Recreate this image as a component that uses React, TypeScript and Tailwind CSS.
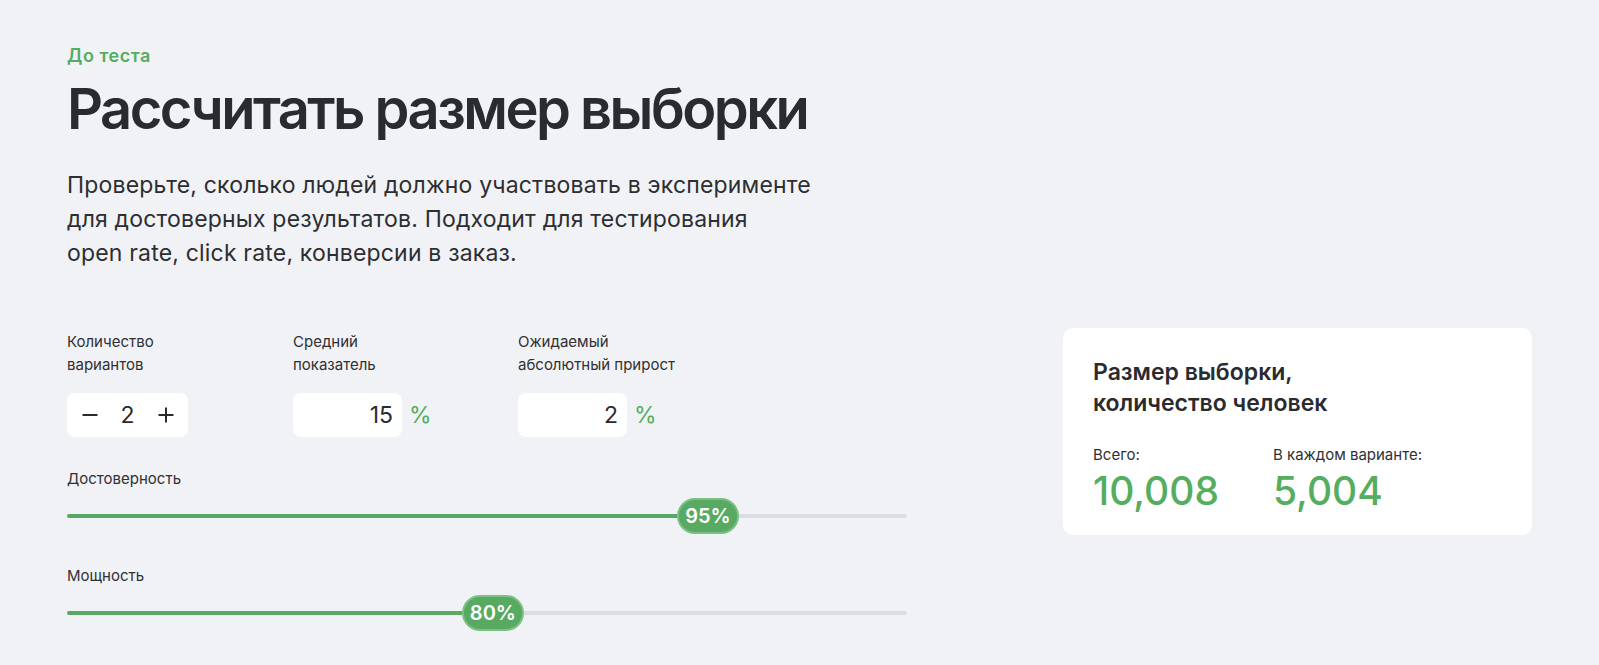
import React from "react";

const font = { fontFamily: "Inter, 'Noto Sans', sans-serif" };

function Slider({ label, value, pos }: { label: string; value: string; pos: "a" | "b" }) {
  return (
    <div className="flex flex-col">
      <div className="text-[15px] leading-[23px] text-[#2f3033]">{label}</div>
      <div className="relative mt-[8px] h-[36px] w-[840px]">
        <div className="absolute left-0 right-0 top-[16px] h-[4px] rounded-full bg-[#dcdde2]" />
        <div
          className={
            "absolute left-0 top-[16px] h-[4px] rounded-full bg-[#58aa62] " +
            (pos === "a" ? "w-[76.3%]" : "w-[50.7%]")
          }
        />
        <div
          className={
            "absolute top-0 flex h-[36px] w-[62px] -translate-x-1/2 items-center justify-center rounded-full border-2 border-[#7cc184] bg-[#58aa62] text-[20px] font-semibold leading-none text-white " +
            (pos === "a" ? "left-[76.3%]" : "left-[50.7%]")
          }
        >
          {value}
        </div>
      </div>
    </div>
  );
}

function Label({ children }: { children: React.ReactNode }) {
  return <div className="text-[15px] leading-[23px] text-[#2f3033]">{children}</div>;
}

export default function App() {
  return (
    <div className="min-h-screen w-full bg-[#f1f2f6] text-[#2a2b2f]" style={font}>
      <div className="px-[67px] pt-[44px]">
        <div className="text-[18px] font-semibold leading-[24px] tracking-[0.03em] text-[#55ad60]">До теста</div>
        <h1 className="mt-[8px] whitespace-nowrap text-[56px] font-semibold leading-[66px] tracking-[-0.045em] text-[#2a2b2f]">
          Рассчитать размер выборки
        </h1>
        <p className="mt-[26px] whitespace-nowrap text-[23px] leading-[34px] tracking-[0.008em] text-[#2d2e32]">
          Проверьте, сколько людей должно участвовать в эксперименте
          <br />
          для достоверных результатов. Подходит для тестирования
          <br />
          open rate, click rate, конверсии в заказ.
        </p>

        <div className="mt-[60px] flex items-start justify-between">
          <div className="flex w-[840px] flex-col">
            <div className="grid grid-cols-[226px_225px_auto]">
              <div className="flex flex-col">
                <Label>
                  Количество
                  <br />
                  вариантов
                </Label>
                <div className="mt-[17px] grid h-[44px] w-[121px] grid-cols-[45px_31px_45px] items-center rounded-[8px] bg-white">
                  <div className="flex items-center justify-center">
                    <svg width="16" height="16" viewBox="0 0 16 16">
                      <line x1="0.5" y1="8" x2="15.5" y2="8" stroke="#2a2b2f" strokeWidth="2" />
                    </svg>
                  </div>
                  <div className="text-center text-[23px] leading-none">2</div>
                  <div className="flex items-center justify-center">
                    <svg width="16" height="16" viewBox="0 0 16 16">
                      <line x1="0.5" y1="8" x2="15.5" y2="8" stroke="#2a2b2f" strokeWidth="2" />
                      <line x1="8" y1="0.5" x2="8" y2="15.5" stroke="#2a2b2f" strokeWidth="2" />
                    </svg>
                  </div>
                </div>
              </div>
              <div className="flex flex-col">
                <Label>
                  Средний
                  <br />
                  показатель
                </Label>
                <div className="mt-[17px] flex items-center">
                  <div className="flex h-[44px] w-[109px] items-center justify-end rounded-[8px] bg-white pr-[9px] text-[23px]">
                    15
                  </div>
                  <span className="ml-[7px] text-[23px] text-[#55ad60]">%</span>
                </div>
              </div>
              <div className="flex flex-col">
                <Label>
                  Ожидаемый
                  <br />
                  абсолютный прирост
                </Label>
                <div className="mt-[17px] flex items-center">
                  <div className="flex h-[44px] w-[109px] items-center justify-end rounded-[8px] bg-white pr-[9px] text-[23px]">
                    2
                  </div>
                  <span className="ml-[7px] text-[23px] text-[#55ad60]">%</span>
                </div>
              </div>
            </div>

            <div className="mt-[30px]">
              <Slider label="Достоверность" value="95%" pos="a" />
            </div>
            <div className="mt-[30px]">
              <Slider label="Мощность" value="80%" pos="b" />
            </div>
          </div>

          <div className="-mt-[2px] w-[469px] rounded-[10px] bg-white px-[30px] pb-[22px] pt-[29px]">
            <div className="text-[23px] font-semibold leading-[31px] text-[#2a2b2f]">
              Размер выборки,
              <br />
              количество человек
            </div>
            <div className="mt-[26px] flex">
              <div className="w-[180px]">
                <div className="text-[15px] leading-[20px] text-[#2f3033]">Всего:</div>
                <div className="mt-[4px] text-[39px] font-medium leading-[44px] text-[#55ad60]">10,008</div>
              </div>
              <div>
                <div className="text-[15px] leading-[20px] text-[#2f3033]">В каждом варианте:</div>
                <div className="mt-[4px] text-[39px] font-medium leading-[44px] text-[#55ad60]">5,004</div>
              </div>
            </div>
          </div>
        </div>
      </div>
    </div>
  );
}
